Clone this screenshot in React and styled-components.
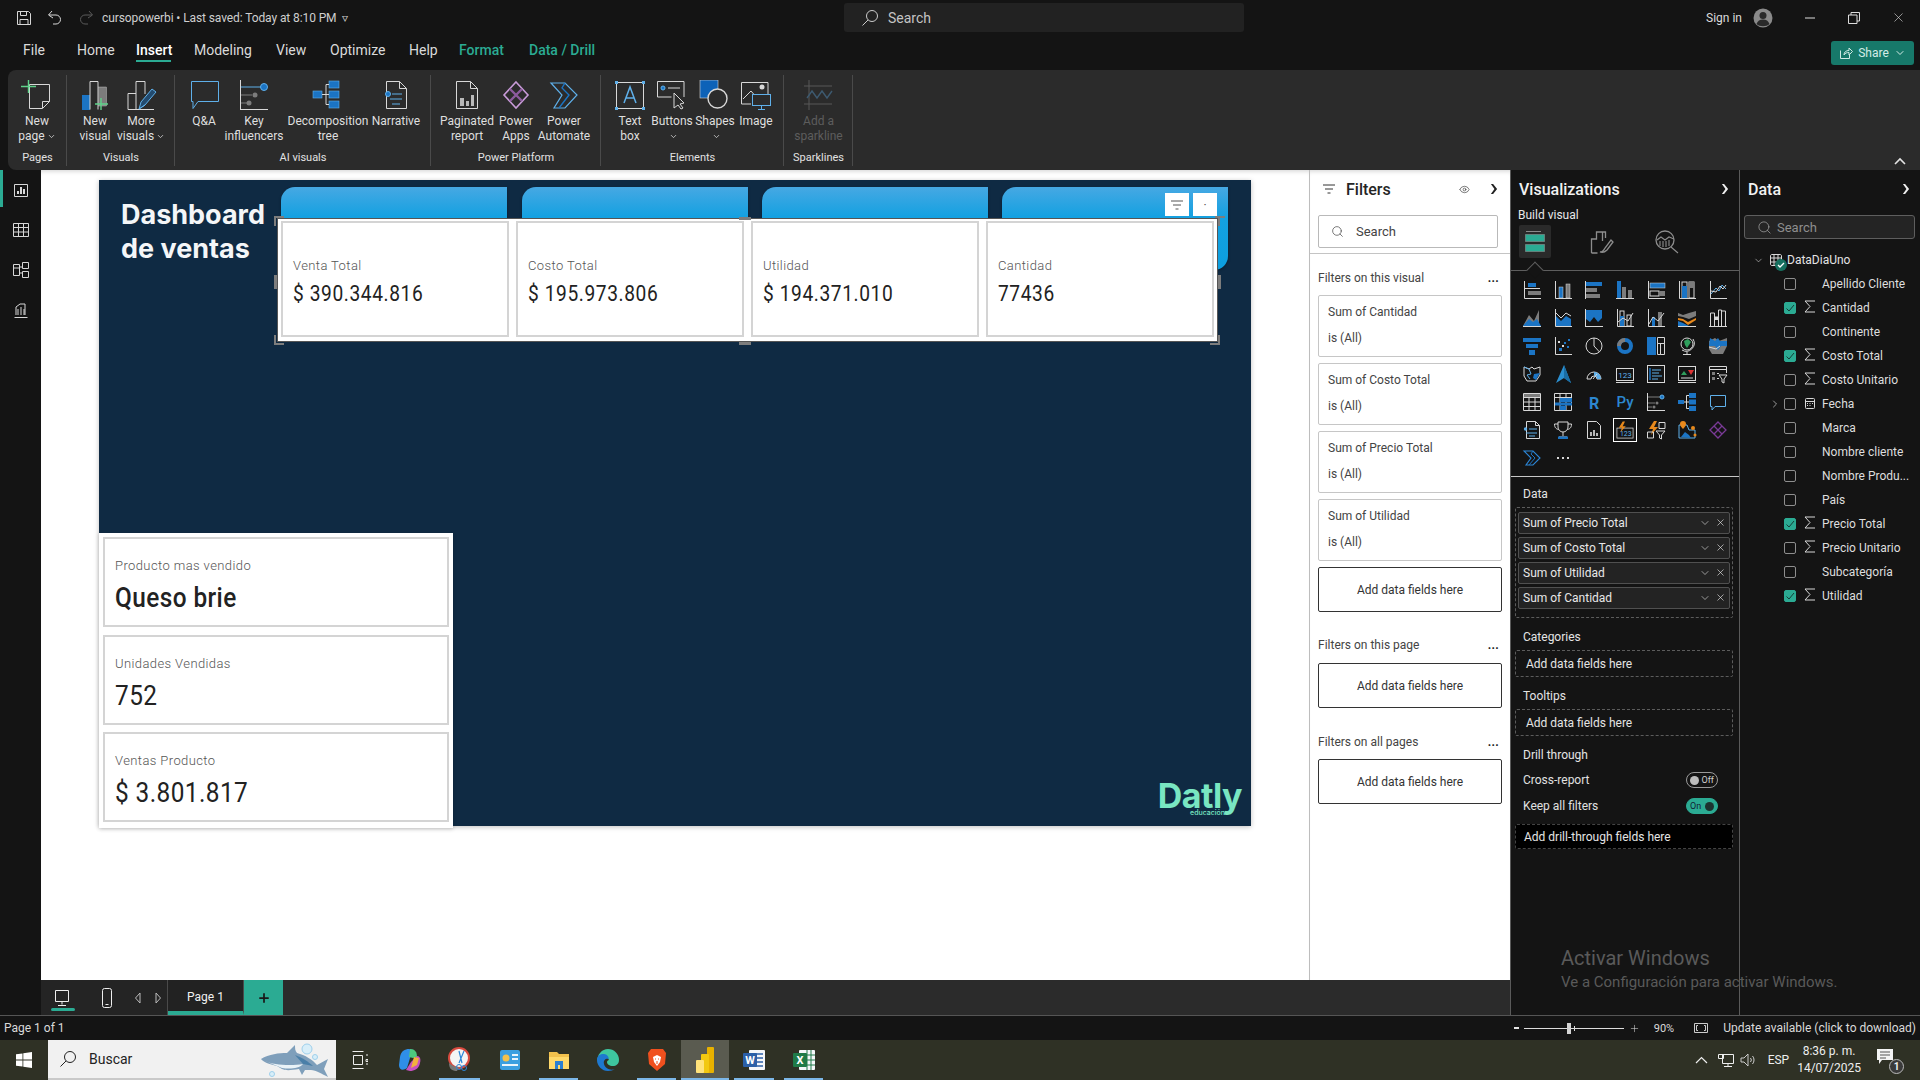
import React from 'react'
import styled, { createGlobalStyle } from 'styled-components'
import { Search, ChevronDown, ChevronRight, X, Plus, Eye } from 'lucide-react'

const GlobalStyle = createGlobalStyle`
  html, body { margin: 0; padding: 0; background: #141414; }
  * { box-sizing: border-box; }
  body { font-family: Roboto, "Open Sans", sans-serif; }
`

const W = '#d8d8d8'
const B = '#1b74c4'
const L = '#5fb0ea'
const G = '#7c7c7c'
const T = '#2bab93'
const O = '#e8891c'

const Page = styled.div`
  width: 1920px;
  height: 1080px;
  display: flex;
  flex-direction: column;
  overflow: hidden;
  position: relative;
  background: #141414;
  color: #e4e4e4;
  font-size: 12px;
`

/* title bar */
const TitleBar = styled.div`
  height: 35px;
  display: grid;
  grid-template-columns: 844px 400px 1fr;
  align-items: center;
`
const TitleLeft = styled.div`
  display: flex;
  align-items: center;
  padding-left: 16px;
  gap: 15px;
`
const DocName = styled.span`
  margin-left: -7px;
  color: #cfcfcf;
  white-space: nowrap;
  font-size: 12px;
  letter-spacing: -0.1px;
`
const TopSearch = styled.div`
  height: 29px;
  background: #222222;
  border-radius: 3px;
  display: flex;
  align-items: center;
  gap: 9px;
  padding-left: 17px;
  font-size: 14px;
  color: #c4c4c4;
`
const TitleRight = styled.div`
  display: flex;
  align-items: center;
  justify-content: flex-end;
  color: #dcdcdc;
`
const SignIn = styled.span`
  margin-right: 11px;
`
const WinBtn = styled.div`
  width: 44px;
  margin-left: ${p => p.$ml || 0}px;
  display: flex;
  justify-content: center;
`

/* menu */
const MenuBar = styled.div`
  height: 35px;
  display: flex;
  align-items: center;
  padding-left: 23px;
`
const MenuItem = styled.div`
  width: ${p => p.$w}px;
  height: 35px;
  line-height: 30px;
  font-size: 14px;
  position: relative;
  color: ${p => (p.$ctx ? T : '#dadada')};
  font-weight: ${p => (p.$active || p.$ctx ? 500 : 400)};
  ${p => p.$active && `
    color: #fff;
    &::after {
      content: '';
      position: absolute;
      left: 0;
      top: 25px;
      width: 35px;
      height: 2px;
      background: ${T};
    }
  `}
`
const ShareBtn = styled.div`
  margin-left: auto;
  margin-right: 6px;
  width: 83px;
  height: 24px;
  background: #17796a;
  border-radius: 3px;
  display: flex;
  align-items: center;
  justify-content: center;
  gap: 5px;
  color: #d4ece6;
`

/* ribbon */
const Ribbon = styled.div`
  height: 100px;
  margin-left: 8px;
  background: #2b2b2b;
  border-radius: 8px 0 0 8px;
  display: flex;
  position: relative;
`
const Group = styled.div`
  width: ${p => p.$w}px;
  display: flex;
  flex-direction: column;
  position: relative;
  &::after {
    content: '';
    position: absolute;
    right: 0;
    top: 5px;
    bottom: 4px;
    width: 1px;
    background: #4a4a4a;
  }
`
const GroupRow = styled.div`
  display: flex;
  height: 80px;
  padding-top: 10px;
  padding-left: ${p => p.$pl || 0}px;
`
const GroupName = styled.div`
  text-align: center;
  font-size: 11px;
  line-height: 16px;
  color: #e2e2e2;
`
const RibbonBtn = styled.div`
  width: ${p => p.$w}px;
  display: flex;
  flex-direction: column;
  align-items: center;
  text-align: center;
  color: ${p => (p.$off ? '#5d5d5d' : '#dfdfdf')};
  font-size: 12px;
  line-height: 15px;
  white-space: nowrap;
  svg.big { width: 32px; height: 30px; margin-bottom: 4px; flex: none; }
`
const Caret = styled(ChevronDown)`
  vertical-align: -1px;
  margin-left: 2px;
`
const CollapseBtn = styled.div`
  position: absolute;
  right: 14px;
  bottom: 5px;
  line-height: 0;
  color: #dcdcdc;
`

/* body */
const Body = styled.div`
  height: 845px;
  display: flex;
`
const LeftNav = styled.div`
  width: 41px;
  flex: none;
  display: flex;
  flex-direction: column;
  align-items: center;
`
const NavBtn = styled.div`
  width: 41px;
  height: 40px;
  display: flex;
  align-items: center;
  justify-content: center;
  position: relative;
  ${p => p.$on && `
    &::before {
      content: '';
      position: absolute;
      left: 0;
      top: 0;
      bottom: 3px;
      width: 3px;
      background: ${T};
    }
  `}
`
const Work = styled.div`
  width: 1469px;
  flex: none;
  display: flex;
  flex-direction: column;
`
const WorkTop = styled.div`
  height: 810px;
  display: flex;
`
const CanvasArea = styled.div`
  width: 1268px;
  background: #fff;
  padding: 10px 0 0 58px;
  box-shadow: inset 0 5px 5px -4px #00000030;
`

/* report, a free canvas of visuals */
const Report = styled.div`
  width: 1152px;
  height: 646px;
  background: #0f2a43;
  position: relative;
  box-shadow: 0 1px 5px #00000040;
`
const ReportTitle = styled.div`
  position: absolute;
  left: 22px;
  top: 18px;
  font-family: Inter, Roboto, sans-serif;
  font-size: 27px;
  line-height: 34px;
  font-weight: 700;
  color: #f4f6f8;
`
const Banner = styled.div`
  position: absolute;
  top: 7px;
  left: ${p => p.$x}px;
  width: 226px;
  height: 83px;
  background: linear-gradient(#46a8e3, #14a1e1 30px, #0c9fe0);
  border-radius: 14px 0 14px 0;
  box-shadow: 0 1px 3px #00000050;
`
const CardGroup = styled.div`
  position: absolute;
  left: 178px;
  top: 38px;
  width: 941px;
  height: 124px;
  background: #fff;
  border: 1px solid #555;
  padding: 2px 4px 4px 3px;
  display: grid;
  grid-template-columns: repeat(4, 228px);
  gap: 7px;
`
const Card = styled.div`
  border: 2px solid #d4d4d4;
  display: flex;
  flex-direction: column;
  justify-content: center;
  padding-left: 10px;
  padding-top: ${p => p.$pt || 5}px;
  background: #fff;
`
const CardLabel = styled.div`
  font-size: 13px;
  line-height: 18px;
  font-weight: 300;
  color: #555;
  letter-spacing: 0.4px;
`
const CardValue = styled.div`
  font-size: 22px;
  line-height: 24px;
  margin-top: 7px;
  color: #222;
  letter-spacing: 0.7px;
  transform: scaleX(0.87);
  transform-origin: left;
`
const Handle = styled.div`
  position: absolute;
  background: #7d7d7d;
  left: ${p => p.$x}px;
  top: ${p => p.$y}px;
  width: ${p => p.$w}px;
  height: ${p => p.$h}px;
`
const HeaderBtn = styled.div`
  position: absolute;
  left: ${p => p.$x}px;
  top: 13px;
  width: 24px;
  height: 23px;
  background: #fff;
  display: flex;
  align-items: center;
  justify-content: center;
  color: #555;
`
const ProductPanel = styled.div`
  position: absolute;
  left: 0;
  top: 353px;
  width: 354px;
  height: 295px;
  background: #fff;
  padding: 4px 4px 6px;
  display: grid;
  grid-template-rows: repeat(3, 90px);
  gap: 7.5px;
  box-shadow: 0 1px 4px #00000030;
`
const ProductValue = styled(CardValue)`
  font-size: 28px;
  line-height: 32px;
  margin-top: 7px;
  letter-spacing: 0.5px;
  font-weight: ${p => (p.$bold ? 500 : 400)};
`
const Logo = styled.div`
  position: absolute;
  right: 9px;
  bottom: 15px;
  font-family: Inter, sans-serif;
  font-weight: 700;
  font-size: 34px;
  line-height: 30px;
  letter-spacing: -0.5px;
  color: #79e6c2;
`
const LogoSub = styled.div`
  position: absolute;
  right: 17px;
  top: calc(100% - 2px);
  font-size: 7px;
  line-height: 8px;
  letter-spacing: 0;
  font-weight: 500;
`

/* filters */
const FiltersPane = styled.div`
  width: 201px;
  background: #fff;
  border-left: 1px solid #bdbdbd;
  color: #333;
  box-shadow: inset 0 5px 5px -4px #00000030;
`
const PaneHead = styled.div`
  height: 38px;
  display: flex;
  align-items: center;
  gap: ${p => p.$gap || 0}px;
  padding: 0 ${p => p.$pr || 10}px 0 ${p => p.$pl || 8}px;
  font-size: 16px;
  font-weight: 500;
  color: ${p => (p.$light ? '#252525' : '#f2f2f2')};
`
const PushRight = styled.div`
  margin-left: auto;
  display: flex;
  align-items: center;
  gap: 20px;
  line-height: 0;
`
const FilterSearchWrap = styled.div`
  padding: 7px 0 5px 8px;
  border-bottom: 1px solid #c4c4c4;
`
const FilterSearch = styled.div`
  width: 180px;
  height: 33px;
  border: 1px solid #b9b9b9;
  border-radius: 2px;
  display: flex;
  align-items: center;
  gap: 12px;
  padding-left: 12px;
  font-size: 13px;
  color: #444;
`
const FilterBody = styled.div`
  padding: 16px 8px 0;
`
const FilterTitle = styled.div`
  height: 16px;
  display: flex;
  justify-content: space-between;
  align-items: center;
  margin-top: ${p => p.$mt || 0}px;
  margin-bottom: ${p => p.$mb || 9}px;
  color: #444;
  padding-right: 3px;
`
const Dots = styled.span`
  font-weight: 700;
  font-size: 12px;
  letter-spacing: 0.3px;
  color: #222;
`
const FilterCards = styled.div`
  display: flex;
  flex-direction: column;
  gap: 6px;
`
const FilterCard = styled.div`
  height: 62px;
  border: 1px solid #c6c6c6;
  border-radius: 2px;
  padding: 3px 0 0 9px;
  line-height: 26px;
  color: #444;
`
const AddFields = styled.div`
  height: 45px;
  border: 1px solid #333;
  border-radius: 2px;
  display: flex;
  align-items: center;
  justify-content: center;
  color: #333;
`

/* tab bar */
const TabBar = styled.div`
  height: 35px;
  display: flex;
  background: #2b2b2b;
`
const DeviceBox = styled.div`
  width: 127px;
  display: flex;
  align-items: center;
  background: #242424;
  border-right: 1px solid #4a4a4a;
  padding-left: 13px;
  position: relative;
`
const DeviceBtn = styled.div`
  width: ${p => p.$w}px;
  line-height: 0;
`
const DeviceMark = styled.div`
  position: absolute;
  left: 10px;
  bottom: 4px;
  width: 24px;
  height: 3px;
  border-radius: 2px;
  background: ${T};
`
const PageTab = styled.div`
  width: 76px;
  display: flex;
  align-items: center;
  justify-content: center;
  background: #222;
  color: #f0f0f0;
  border-bottom: 4px solid ${T};
  border-right: 1px solid #4a4a4a;
  padding-top: 3px;
`
const AddTab = styled.div`
  width: 39px;
  background: ${T};
  display: flex;
  align-items: center;
  justify-content: center;
  color: #1a1a1a;
`

/* visualizations */
const VizPane = styled.div`
  width: 229px;
  flex: none;
  border-left: 1px solid #5a5a5a;
  display: flex;
  flex-direction: column;
`
const BuildLabel = styled.div`
  height: 14px;
  line-height: 14px;
  padding-left: 7px;
  color: #e8e8e8;
`
const VizTabs = styled.div`
  margin-top: 3px;
  height: 46px;
  display: flex;
  padding-left: 8px;
  border-bottom: 1px solid #5e5e5e;
  position: relative;
  &::after {
    content: '';
    position: absolute;
    left: 18px;
    bottom: -6px;
    width: 11px;
    height: 11px;
    background: #141414;
    border-left: 1px solid #5e5e5e;
    border-top: 1px solid #5e5e5e;
    transform: rotate(45deg);
  }
`
const VizTab = styled.div`
  width: 32px;
  height: 33px;
  margin-right: ${p => p.$mr || 0}px;
  background: ${p => (p.$on ? '#2a2a2a' : 'transparent')};
  border-radius: 2px;
  display: flex;
  align-items: center;
  justify-content: center;
`
const VizGrid = styled.div`
  margin-top: 5px;
  padding-left: 5px;
  display: grid;
  grid-template-columns: repeat(7, 31px);
  grid-auto-rows: 28px;
  height: 201px;
  border-bottom: 1px solid #c8c8c8;
`
const VizCell = styled.div`
  display: flex;
  align-items: center;
  justify-content: center;
  svg { width: 18px; height: 18px; overflow: visible; }
`
const WellLabel = styled.div`
  height: 16px;
  line-height: 16px;
  margin-top: ${p => p.$mt}px;
  margin-bottom: ${p => p.$mb || 5}px;
  padding-left: 12px;
  color: #e4e4e4;
`
const Well = styled.div`
  margin-left: 4px;
  width: 218px;
  border: 1px dashed #5c5c5c;
  border-radius: 2px;
  padding: 4px 2px 8px;
  display: flex;
  flex-direction: column;
  gap: 3px;
`
const Chip = styled.div`
  height: 22px;
  background: #232323;
  border: 1px solid #505050;
  border-radius: 2px;
  display: flex;
  align-items: center;
  padding: 0 3px 0 4px;
  color: #e8e8e8;
`
const ChipIcons = styled.div`
  margin-left: auto;
  display: flex;
  gap: 4px;
  color: #e8e8e8;
  line-height: 0;
`
const EmptyWell = styled.div`
  margin-left: 4px;
  width: 218px;
  height: ${p => p.$h || 27}px;
  margin-top: ${p => p.$mt || 0}px;
  border: 1px dashed ${p => (p.$dark ? '#444' : '#5c5c5c')};
  background: ${p => (p.$dark ? '#000' : 'transparent')};
  border-radius: 2px;
  display: flex;
  align-items: center;
  padding-left: ${p => (p.$dark ? 8 : 10)}px;
  color: #e4e4e4;
`
const ToggleRow = styled.div`
  height: 26px;
  display: flex;
  align-items: center;
  justify-content: space-between;
  padding: 0 21px 0 12px;
  color: #e0e0e0;
`
const Toggle = styled.div`
  width: 32px;
  height: 16px;
  border-radius: 8px;
  display: flex;
  align-items: center;
  justify-content: space-between;
  flex-direction: ${p => (p.$on ? 'row' : 'row-reverse')};
  padding: 0 3px;
  font-size: 9px;
  background: ${p => (p.$on ? T : 'transparent')};
  color: ${p => (p.$on ? '#123' : '#cfcfcf')};
  border: 1px solid ${p => (p.$on ? T : '#9a9a9a')};
  &::after {
    content: '';
    width: 9px;
    height: 9px;
    border-radius: 50%;
    background: ${p => (p.$on ? '#1c3330' : '#bdbdbd')};
  }
`

/* data pane */
const DataPane = styled.div`
  width: 181px;
  flex: none;
  border-left: 1px solid #5a5a5a;
`
const DataSearch = styled.div`
  margin: 7px 0 9px 4px;
  width: 171px;
  height: 24px;
  background: #242424;
  border: 1px solid #5e5e5e;
  border-radius: 3px;
  display: flex;
  align-items: center;
  gap: 5px;
  padding-left: 12px;
  font-size: 13px;
  color: #8e8e8e;
`
const TreeRoot = styled.div`
  height: 24px;
  display: flex;
  align-items: center;
  padding-left: 13px;
  color: #e4e4e4;
`
const RootIcon = styled.div`
  position: relative;
  width: 14px;
  height: 14px;
  margin: 0 4px 0 5px;
  line-height: 0;
`
const Badge = styled.div`
  position: absolute;
  left: 6px;
  top: 6px;
  width: 12px;
  height: 12px;
  border-radius: 50%;
  background: #16705f;
  line-height: 0;
`
const TreeRow = styled.div`
  height: 24px;
  display: grid;
  grid-template-columns: 44px 12px 8px 12px 6px 1fr;
  align-items: center;
  color: #dedede;
`
const Expand = styled.div`
  display: flex;
  justify-content: flex-end;
  padding-right: 3px;
  line-height: 0;
`
const Check = styled.div`
  width: 12px;
  height: 12px;
  border-radius: 2px;
  border: 1px solid ${p => (p.$on ? T : '#8e8e8e')};
  background: ${p => (p.$on ? T : 'transparent')};
  line-height: 0;
`
const FieldName = styled.div`
  grid-column: 6;
  white-space: nowrap;
`
const Watermark = styled.div`
  position: absolute;
  left: 1561px;
  top: 945px;
  color: #5a5a5a;
  font-size: 15px;
  line-height: 22px;
  pointer-events: none;
`
const WatermarkBig = styled.div`
  font-size: 20px;
  line-height: 26px;
`

/* status */
const StatusBar = styled.div`
  height: 25px;
  border-top: 1px solid #555;
  display: flex;
  align-items: center;
  padding: 0 4px;
  color: #dadada;
  font-size: 12px;
`
const StatusRight = styled.div`
  margin-left: auto;
  display: flex;
  align-items: center;
`
const MinusMark = styled.div`
  width: 5px;
  height: 2px;
  background: #e4e4e4;
  margin-right: 2px;
`
const Slider = styled.div`
  width: 100px;
  height: 1px;
  background: #ddd;
  margin: 0 5px 0 3px;
  position: relative;
  &::before {
    content: '';
    position: absolute;
    left: 43px;
    top: -5px;
    width: 4px;
    height: 11px;
    background: #d4d4d4;
  }
  &::after {
    content: '';
    position: absolute;
    left: 50px;
    top: -2px;
    width: 1px;
    height: 5px;
    background: #ddd;
  }
`
const ZoomPct = styled.span`
  margin: 0 20px 0 14px;
  font-size: 11px;
`
const FitIcon = styled.span`
  line-height: 0;
  margin-right: 15px;
`

/* taskbar */
const TaskBar = styled.div`
  height: 40px;
  display: flex;
  align-items: stretch;
  background: #2f3125;
  color: #f0f0f0;
`
const StartBtn = styled.div`
  width: 48px;
  display: flex;
  align-items: center;
  justify-content: center;
`
const TaskSearch = styled.div`
  width: 288px;
  background: #f1f1f1;
  border-bottom: 2px solid #c9c9c9;
  display: flex;
  align-items: center;
  gap: 12px;
  padding-left: 11px;
  color: #222;
  font-size: 14px;
  position: relative;
`
const Shark = styled.div`
  position: absolute;
  right: 4px;
  top: 1px;
  line-height: 0;
`
const TaskApps = styled.div`
  display: flex;
`
const TaskApp = styled.div`
  width: ${p => p.$w || 49}px;
  display: flex;
  align-items: center;
  justify-content: center;
  position: relative;
  background: ${p => (p.$active ? '#5a5b50' : 'transparent')};
  ${p => p.$open && `
    &::after {
      content: '';
      position: absolute;
      left: ${p.$active ? 0 : 5}px;
      right: ${p.$active ? 0 : 5}px;
      bottom: 0;
      height: 2px;
      background: #7cb7e8;
    }
  `}
`
const Tray = styled.div`
  margin-left: auto;
  display: flex;
  align-items: center;
  color: #eee;
`
const TrayItem = styled.div`
  margin-right: ${p => p.$mr || 0}px;
  line-height: 0;
  font-size: 12px;
`
const Clock = styled.div`
  text-align: center;
  font-size: 12px;
  line-height: 17px;
  margin-right: 15px;
  white-space: nowrap;
`
const Notify = styled.div`
  width: 22px;
  height: 24px;
  position: relative;
  margin-right: 22px;
  line-height: 0;
`
const NotifyCount = styled.div`
  position: absolute;
  right: -6px;
  bottom: -2px;
  width: 15px;
  height: 15px;
  border-radius: 50%;
  border: 1px solid #bbb;
  background: #3a3a3a;
  font-size: 10px;
  line-height: 13px;
  text-align: center;
  font-weight: 700;
`

/* drawings */
const Svg = ({ w = 32, h = 30, vb, className, children }) => (
  <svg className={className} width={w} height={h} viewBox={vb || `0 0 ${w} ${h}`} fill="none" strokeWidth="1">
    {children}
  </svg>
)
const Big = ({ children }) => <Svg className="big">{children}</Svg>

const NewPageIcon = () => (
  <Big>
    <path d="M8.5 4.5h20v17l-7 7h-13z" stroke={W} />
    <path d="M21.5 28v-6.5h7" stroke={W} />
    <path d="M0 6.5h15M7.5 0v13" stroke="#5fd28a" strokeWidth="1.4" />
  </Big>
)
const NewVisualIcon = () => (
  <Big>
    <rect x="3" y="15" width="8" height="15" fill={B} />
    <path d="M11 29.5V1.5h8v28" stroke={W} />
    <rect x="19.5" y="7" width="8" height="19" fill={G} stroke={W} strokeWidth="0.4" />
    <path d="M22 18v12M16 24h13" stroke="#5fd28a" strokeWidth="1.4" />
  </Big>
)
const MoreVisualsIcon = () => (
  <Big>
    <path d="M3 29.5v-16h8m0 16V1.5h9V14M3 29.5h26" stroke={W} />
    <path d="M14 29l2-7 11-13 4 3-11 13z" stroke={L} fill={B} fillOpacity="0.45" />
    <path d="M14 29l6-4" stroke={L} />
  </Big>
)
const QnaIcon = () => (
  <Big>
    <path d="M3.5 1.5h27v20H10l-5 7v-7H3.500z" stroke={L} />
  </Big>
)
const KeyInfIcon = () => (
  <Big>
    <path d="M2.5 0v30M2.500 29.500H30" stroke={W} />
    <path d="M3 7h20" stroke={L} />
    <circle cx="26" cy="7" r="3.500" fill={B} stroke={L} />
    <path d="M3 15h11M3 23h6" stroke={G} />
    <circle cx="17" cy="15" r="2.500" fill={G} />
    <circle cx="11" cy="23" r="2.500" fill={G} />
  </Big>
)
const DecompIcon = () => (
  <Big>
    <rect x="1" y="11" width="9" height="7" fill={B} stroke={L} strokeWidth="0.6" />
    <rect x="17" y="1" width="10" height="7" fill={B} stroke={L} strokeWidth="0.6" />
    <rect x="17" y="11" width="10" height="7" fill={B} stroke={L} strokeWidth="0.6" />
    <rect x="17" y="21" width="10" height="7" fill={B} stroke={L} strokeWidth="0.6" />
    <path d="M10 14.500h7M14 4.500v20M14 4.500h3M14 24.500h3" stroke={W} />
  </Big>
)
const NarrativeIcon = () => (
  <Big>
    <path d="M6.500 1.500h13l7 7v20h-20z" stroke={W} />
    <path d="M19.500 1.500v7h7" stroke={W} />
    <circle cx="8" cy="14" r="2.500" fill={B} stroke={L} />
    <path d="M12 14h10M10 19h12M12 24h8" stroke={L} />
  </Big>
)
const PaginatedIcon = () => (
  <Big>
    <path d="M5.500 1.500h14l7 7v20h-21z" stroke={W} />
    <path d="M19.500 1.500v7h7" stroke={W} />
    <path d="M9 18h4v8H9zM15 21h3v5h-3zM20 15h3v11h-3z" fill="#b9b9b9" />
  </Big>
)
const PowerAppsIcon = ({ c = '#c89bd8', h = '#8c5a9e' }) => (
  <Big>
    <path d="M16 2l12 13-12 13L4 15z" stroke={c} strokeWidth="1.6" />
    <path d="M10 9l12 12M22 9L10 21" stroke={h} strokeWidth="2.4" />
  </Big>
)
const AutomateIcon = () => (
  <Big>
    <path d="M3 3h14l12 12-12 13H6l8-13z" stroke={L} strokeWidth="1.2" />
    <path d="M17 3l-3 5 7 7-10 13" stroke={B} strokeWidth="1.400" />
  </Big>
)
const TextBoxIcon = () => (
  <Big>
    <rect x="2.500" y="2.500" width="27" height="26" stroke={W} />
    <path d="M1 1h3v3H1zM28 1h3v3h-3zM1 27h3v3H1zM28 27h3v3h-3z" fill={L} />
    <path d="M10 23l6-16 6 16M12 18h8" stroke={L} strokeWidth="1.500" />
  </Big>
)
const ButtonsIcon = () => (
  <Big>
    <path d="M28 17V1.500H1.500V17h14" stroke={W} />
    <circle cx="7" cy="8" r="2" stroke={L} fill={B} />
    <path d="M12 8h12" stroke={W} />
    <path d="M18 13v15l4-3 3 4 2-1-3-4 4-1z" stroke={W} fill="#2b2b2b" />
  </Big>
)
const ShapesIcon = () => (
  <Big>
    <rect x="1" y="0" width="18" height="18" fill="#0d62b8" stroke={W} strokeWidth="0.6" />
    <circle cx="18.500" cy="18.500" r="9.500" stroke={W} strokeWidth="1.400" fill="#2b2b2b" />
  </Big>
)
const ImageIcon = () => (
  <Big>
    <path d="M28 14V2.500H1.500V24H11" stroke={W} />
    <path d="M3 19l8-8 6 7" stroke={W} />
    <circle cx="22" cy="7" r="2.500" fill={W} />
    <rect x="12.500" y="14.500" width="18" height="11" stroke={L} fill="#2b2b2b" />
    <path d="M21.500 26v3M18 29.500h7" stroke={L} />
  </Big>
)
const SparkIcon = () => (
  <Big>
    <path d="M6 0v30M1 6h28M1 24h28" stroke="#585858" />
    <path d="M4 18l5-7 5 7 5-7 5 7 5-7" stroke="#3d5a70" strokeWidth="1.400" />
  </Big>
)

const NavReport = () => (
  <Svg w={16} h={16}><path d="M1.500 2.500h13v12h-13z" stroke={W} /><path d="M4 12V9h2v3zM7 12V5h2v7zM10 12V7h2v5z" fill={W} /></Svg>
)
const NavTable = () => (
  <Svg w={18} h={16}><path d="M1.500 1.500h15v13h-15zM1.500 5.500h15M1.500 10h15M6.500 1.500v13M11.500 1.500v13" stroke={W} /></Svg>
)
const NavModel = () => (
  <Svg w={18} h={18}><path d="M1.500 3.500h6v11h-6zM10.500 1.500h6v6h-6zM10.500 10.500h6v6h-6zM7.500 6h3M7.500 12h3M1.500 7h6" stroke={W} /></Svg>
)
const NavDax = () => (
  <Svg w={18} h={18}><path d="M2.500 16.500h13M4 14V6l4-3h5v11M6 14V8M9 14V6M12 14V8" stroke={W} /></Svg>
)

const AxisV = () => <path d="M1.500 0v17.500H18" stroke={W} />
const viz = [
  <><AxisV /><rect x="5" y="2" width="8" height="4" fill={B} /><path d="M1.500 7.500H17" stroke={W} /><rect x="5" y="10" width="13" height="4" fill={G} /></>,
  <><AxisV /><rect x="5" y="6" width="4" height="11" fill={B} stroke={W} strokeWidth="0.5" /><rect x="12" y="3" width="4" height="14" fill={G} stroke={W} strokeWidth="0.5" /></>,
  <><rect x="1" y="1" width="16" height="4" fill={B} /><rect x="1" y="7" width="11" height="4" fill={G} /><rect x="1" y="13" width="14" height="4" fill={G} /><path d="M.500 0v18" stroke={W} /></>,
  <><rect x="1" y="0" width="4" height="18" fill={B} /><rect x="6" y="6" width="4" height="12" fill={G} /><rect x="12" y="9" width="4" height="9" fill={G} /><path d="M0 17.500h18" stroke={W} /></>,
  <><AxisV /><rect x="3" y="2" width="15" height="5" fill={B} stroke={W} strokeWidth="0.5" /><rect x="3" y="10" width="9" height="5" stroke={W} /><rect x="12" y="10" width="6" height="5" fill={G} /></>,
  <><AxisV /><rect x="4" y="1" width="5" height="16" stroke={W} /><rect x="4" y="5" width="5" height="12" fill={B} /><rect x="11" y="1" width="5" height="16" stroke={W} /><rect x="11" y="1" width="5" height="6" fill={G} /></>,
  <><AxisV /><path d="M2 13l5-6 3 3 3-6 4 4" stroke={L} /><path d="M2 10l5 1 4-6 3 3 3-4" stroke={W} /></>,
  <><path d="M0 17l6-11 5 6 5-11v16z" fill={G} /><path d="M0 17l6-7 4 3 4-3 4 7z" fill={B} /><path d="M0 17.500h18" stroke={W} /></>,
  <><AxisV /><path d="M2 7l5 5 5-5 5 3v7H2z" fill={B} /><path d="M2 4l5 5 5-5 5 3" stroke={W} /></>,
  <><path d="M1 1h16v8l-4 4-4-5-4 5-4-3z" fill={B} /><path d="M.500 0v18M0 17.500h18" stroke={W} /></>,
  <><AxisV /><rect x="4" y="2" width="4" height="15" stroke={W} /><rect x="4" y="7" width="4" height="10" fill={B} /><rect x="11" y="6" width="4" height="11" stroke={W} /><path d="M2 13l5-4 5 3 5-8" stroke={W} /></>,
  <><AxisV /><rect x="5" y="8" width="3" height="9" fill={B} /><rect x="11" y="3" width="4" height="14" fill={G} /><path d="M2 15l4-7 5 4 6-8" stroke={W} /></>,
  <><path d="M0 4l5 2 6-2 7-2v5l-7 3-6-2-5-1z" fill={G} /><path d="M0 9l5 1 5 3 8-4v2l-8 5-5-4-5-1z" fill={O} /><path d="M0 12l5 2 6 3h7v1H0z" fill={B} /><path d="M0 17.500h18" stroke={W} /></>,
  <><path d="M1.500 18V4h4v14M5.500 18V8h4v10M9.500 18V1h3v17M12.500 18V2h4v16M0 17.500h18" stroke={W} /><rect x="6" y="8" width="3" height="3" fill={W} /></>,
  <><path d="M0 1h18v4H0z" fill={B} /><path d="M3 7h12v4H3z" fill={B} /><path d="M6 13h6v5H6z" fill={B} /></>,
  <><AxisV /><path d="M5 11h3v3H5zM10 5h2v2h-2zM14 2h2v2h-2zM13 9h2v2h-2z" fill={B} /><path d="M8 8h2v2H8zM4 4h2v2H4z" fill={W} /></>,
  <><circle cx="9" cy="9" r="8" stroke={W} /><path d="M9 9V1M9 9l5.500 6" stroke={W} /></>,
  <><circle cx="9" cy="9" r="6" stroke={B} strokeWidth="4" /><path d="M3 9a6 6 0 0 1 6-6" stroke={G} strokeWidth="4" /></>,
  <><path d="M0 0h9v18H0z" fill={B} /><path d="M10.500.500h7v6h-7zM10.500 6.500h3v11h-3zM13.500 6.500h4v11h-4z" stroke={W} /></>,
  <><circle cx="9" cy="7" r="6" stroke={W} /><path d="M6 4l4-2 3 3-2 3-2 3-2-3z" fill="#2f9e5c" /><path d="M15 2a8 8 0 0 1-11 11M9 15v2M5 17.500h8" stroke={W} /></>,
  <><path d="M0 4l6-3 4 3 8-3v8l-4 8H3l-3-5z" fill={G} /><path d="M1 1l5 3 3-3 2 3h7v5h-6l-3 4-3-4H0z" fill={B} /><path d="M0 10l7 2 4-3" stroke={W} /></>,
  <><path d="M1 2l5 2 3-2 2 2 6-2v8l-4 6H4l-3-5z" stroke={W} /><path d="M1 2l5 2 2 5-4 1 3 4" stroke={L} /><path d="M11 9l6-1-4 7-3-2z" fill={B} /></>,
  <><path d="M10 0l7 18-7-5-8 5z" fill="#2b8fd0" /><path d="M10 0v13l7 5z" fill="#1b6da4" /></>,
  <><path d="M2 14a7 7 0 0 1 14 0h-4a3 3 0 0 0-6 0z" stroke={W} /><path d="M9 7a7 7 0 0 1 7 7h-4a3 3 0 0 0-3-3z" fill={L} /><path d="M8 14l4-5" stroke={W} /></>,
  <><rect x=".500" y="3.500" width="17" height="12" stroke={W} /><text x="9" y="12.500" fontSize="8" fill={L} textAnchor="middle" fontFamily="Roboto">123</text><path d="M0 17.500h18" stroke={W} /></>,
  <><rect x=".500" y=".500" width="17" height="17" stroke={W} /><path d="M3 3v12" stroke={B} strokeWidth="1.500" /><path d="M5 5h9M5 8h7M5 11h10M5 14h6" stroke={L} /></>,
  <><rect x=".500" y="1.500" width="17" height="14" stroke={W} /><path d="M3 10l3-4 3 4z" fill="#2f9e5c" /><path d="M10 5h6l-3 5z" fill="#d33" /><path d="M0 17.500h18M3 13h12" stroke={W} /></>,
  <><path d="M.500 18V1.500h17V8M0 4.500h18" stroke={W} /><path d="M3 7h3v3H3zM3 12h3v3H3z" fill={G} /><path d="M8 8.500h2M8 13.500h2" stroke={W} /><path d="M10 10h8l-3 4v4l-2-1v-3z" stroke={W} /></>,
  <><path d="M.500.500h17v17H.500zM0 4.500h18M0 9h18M0 13.500h18M6 4v14M12 4v14" stroke={W} /><rect x="1" y="1" width="16" height="3" fill={G} /></>,
  <><path d="M.500.500h17v17H.500zM6 0v18M12 0v18M0 4.500h18" stroke={W} /><path d="M6 5h12v4H6zM1 9.500h17v3H1zM6 13h6v4H6z" fill={B} /></>,
  <text x="9" y="15.500" fontSize="16" fontWeight="700" fill="#2c87cf" textAnchor="middle" fontFamily="Roboto">R</text>,
  <text x="9" y="14" fontSize="15" fontWeight="500" fill="#2c87cf" textAnchor="middle" fontFamily="Roboto">Py</text>,
  <><path d="M.500 0v18M0 17.500h18" stroke={W} /><path d="M1 4h12M1 10h7M1 14h4" stroke={G} /><circle cx="15" cy="4" r="2" fill={B} stroke={L} /><circle cx="10" cy="10" r="1.500" fill={G} /><circle cx="7" cy="14" r="1.500" fill={G} /></>,
  <><rect x="0" y="7" width="6" height="4" fill={B} /><path d="M11 0h7v5h-7zM11 6.500h7v5h-7zM11 13h7v5h-7z" fill={B} /><path d="M6 9h5M8.500 2.500v13M8.500 2.500H11M8.500 15.500H11" stroke={W} /></>,
  <path d="M1.500 2.500h15v11H6l-3 3.500v-3.500H1.500z" stroke={L} />,
  <><path d="M3.500.500h9l4 4v13h-13z" stroke={W} /><path d="M12.500.500v4h4" stroke={W} /><circle cx="2.500" cy="8" r="1.700" fill={L} /><path d="M6 8h8M3 12h11M6 15h6" stroke={L} /></>,
  <><path d="M4 1h10v5a5 5 0 0 1-10 0zM4 3H0.500c0 4 2 5 4 5.500M14 3h3.500c0 4-2 5-4 5.500" stroke={W} /><path d="M9 11v4M5 16h8" stroke={W} /><rect x="4" y="15.500" width="10" height="2.500" fill={B} /></>,
  <><path d="M2.500.500h9l4 4v13h-13z" stroke={W} /><path d="M5 15v-4h2v4zM8 15V9h2v6zM11 15v-3h2v3z" fill="#b9b9b9" /></>,
  <><rect x="2.500" y="8.500" width="21" height="13" stroke={W} /><text x="14" y="19" fontSize="9" fill={L} textAnchor="middle" fontFamily="Roboto">123</text><path d="M10 0L5 8h4l-2 6 7-8h-4l3-6z" fill={O} /></>,
  <><path d="M7 0L2 8h4L4 14l7-8H7l3-6z" fill={O} /><path d="M12 1.500h6v6h-6zM.500 11h6v6h-6zM9 10h9l-3.500 4v4l-2-1v-3z" stroke={W} /></>,
  <><path d="M1 4h8l2 5h6v8H1z" stroke={L} /><path d="M5 0a3 3 0 0 1 3 3c0 2-3 5-3 5S2 5 2 3a3 3 0 0 1 3-3z" fill={O} /><path d="M3 16l4-5 4 3 2 3z" fill={B} /><circle cx="15" cy="7" r="2" fill={O} /><circle cx="17" cy="14" r="1.500" fill={O} /></>,
  <><path d="M9 1l8 8-8 8-8-8z" stroke="#7a3a96" strokeWidth="1.300" /><path d="M5 5l8 8M13 5l-8 8" stroke="#7a3a96" strokeWidth="1.300" /></>,
  <><path d="M1 2h9l7 7-7 7H3l5-7z" stroke="#2c87d8" strokeWidth="1.100" /><path d="M10 2L8 5l4 4-6 7" stroke={B} /></>,
  <path d="M3 8h2v2H3zM8 8h2v2H8zM13 8h2v2h-2z" fill={W} />
]

const SelectedViz = styled.div`
  width: 24px;
  height: 24px;
  border: 1px solid #fff;
  display: flex;
  align-items: center;
  justify-content: center;
  svg { width: 20px; height: 20px; }
`

const BuildTabIcon = () => (
  <Svg w={20} h={24}>
    <path d="M1 1.500h15" stroke="#8a8a8a" />
    <rect x=".500" y="4.500" width="19" height="7" fill={T} stroke="#9a9a9a" strokeDasharray="1 1" />
    <rect x=".500" y="14.500" width="19" height="7" fill={T} stroke="#9a9a9a" strokeDasharray="1 1" />
  </Svg>
)
const FormatTabIcon = () => (
  <Svg w={24} h={24}>
    <path d="M1.500 23V9h5V2h6v9M12.500 2h3v6M1.500 23h6" stroke="#8d8d8d" strokeWidth="1.300" />
    <path d="M10 22c3 0 4-2 5-4l6-8 2 2-6 8c-2 2-4 3-7 2z" stroke="#8d8d8d" strokeWidth="1.300" />
  </Svg>
)
const AnalyticsTabIcon = () => (
  <Svg w={24} h={24}>
    <circle cx="10" cy="10" r="9" stroke="#8d8d8d" strokeWidth="1.300" />
    <path d="M2 10l4-3 4 3 4-3 5 2M5 16v-5M8 17v-6M11 17v-6M14 16v-6M16 17l7 6" stroke="#8d8d8d" strokeWidth="1.100" />
  </Svg>
)

const Chevrons = ({ c = '#eee' }) => (
  <Svg w={8} h={10} vb="0 0 9 11"><path d="M1 0h2.500L8 5.500 3.500 11H1l4-5.500z" fill={c} /></Svg>
)
const Tick = () => (
  <Svg w={10} h={10}><path d="M1.500 5.500l2.500 2.500 5-6" stroke="#143f38" /></Svg>
)
const Sigma = () => (
  <Svg w={12} h={13}><path d="M11 1H1l5 5.500L1 12h10" stroke={W} /></Svg>
)
const CalIcon = () => (
  <Svg w={12} h={12}><path d="M1.500 2.500c0-1 .5-1 1-1h7c.5 0 1 0 1 1v8c0 1-.5 1-1 1h-7c-.5 0-1 0-1-1zM1.500 4.500h9" stroke={W} /><path d="M3 6h1v1H3zM5.500 6h1v1h-1zM8 6h1v1H8zM3 8h1v1H3zM5.500 8h1v1h-1z" fill={W} /></Svg>
)

const cards = [
  ['Venta Total', '$ 390.344.816'],
  ['Costo Total', '$ 195.973.806'],
  ['Utilidad', '$ 194.371.010'],
  ['Cantidad', '77436']
]
const product = [
  ['Producto mas vendido', 'Queso brie', true],
  ['Unidades Vendidas', '752', false],
  ['Ventas Producto', '$ 3.801.817', false]
]
const handles = [
  [175, 36, 10, 2], [175, 36, 2, 10], [175, 155, 2, 10], [175, 163, 10, 2],
  [175, 95, 3, 14], [1116, 36, 10, 2], [1119, 36, 2, 10], [1119, 155, 2, 10], [1111, 163, 10, 2],
  [1119, 95, 3, 14], [640, 37, 12, 3], [640, 162, 12, 3]
]
const fields = [
  ['Apellido Cliente'],
  ['Cantidad', true, 's'],
  ['Continente'],
  ['Costo Total', true, 's'],
  ['Costo Unitario', false, 's'],
  ['Fecha', false, 'c', true],
  ['Marca'],
  ['Nombre cliente'],
  ['Nombre Produ...'],
  ['País'],
  ['Precio Total', true, 's'],
  ['Precio Unitario', false, 's'],
  ['Subcategoría'],
  ['Utilidad', true, 's']
]

export default function App() {
  return (
    <Page>
      <GlobalStyle />
      <TitleBar>
        <TitleLeft>
          <Svg w={16} h={16}><path d="M1.500 1.500h11l2 2v11h-13zM4.500 1.500v4h6v-4M4 14.500v-5h8v5" stroke={W} /></Svg>
          <Svg w={16} h={16}><path d="M5 1L1.500 5 6 8M2 5h7a4.500 4.500 0 0 1 0 9H6" stroke={W} /></Svg>
          <Svg w={16} h={16}><path d="M11 1l3.500 4L10 8M14 5H7a4.500 4.500 0 0 0 0 9h3" stroke="#5a5a5a" /></Svg>
          <DocName>cursopowerbi • Last saved: Today at 8:10 PM &nbsp;▿</DocName>
        </TitleLeft>
        <TopSearch>
          <Svg w={18} h={18}><circle cx="11" cy="7" r="5.500" stroke="#ccc" /><path d="M7 11l-5.500 5.500" stroke="#ccc" /></Svg>
          Search
        </TopSearch>
        <TitleRight>
          <SignIn>Sign in</SignIn>
          <Svg w={20} h={20}><circle cx="10" cy="10" r="9.500" fill="#8a8a8a" /><circle cx="10" cy="7.500" r="3.500" fill="#2a2a2a" /><path d="M3.500 16a7 7 0 0 1 13 0c-3 3-10 3-13 0z" fill="#2a2a2a" /></Svg>
          <WinBtn $ml={15}><Svg w={12} h={2}><path d="M1 1h10" stroke="#ddd" /></Svg></WinBtn>
          <WinBtn><Svg w={12} h={12}><path d="M.500 3h8.500v8.500H.500zM3 3V.500h8.500V9H9" stroke="#ddd" /></Svg></WinBtn>
          <WinBtn><X size={15} strokeWidth={1} /></WinBtn>
        </TitleRight>
      </TitleBar>

      <MenuBar>
        <MenuItem $w={54}>File</MenuItem>
        <MenuItem $w={59}>Home</MenuItem>
        <MenuItem $w={58} $active>Insert</MenuItem>
        <MenuItem $w={82}>Modeling</MenuItem>
        <MenuItem $w={54}>View</MenuItem>
        <MenuItem $w={79}>Optimize</MenuItem>
        <MenuItem $w={50}>Help</MenuItem>
        <MenuItem $w={70} $ctx>Format</MenuItem>
        <MenuItem $w={90} $ctx>Data / Drill</MenuItem>
        <ShareBtn>
          <Svg w={14} h={14}><path d="M1.500 4.500v8h9V9M5 9c0-3 2-4.500 5-4.500V2l3.500 3.500L10 9V6.500C8 6.500 6 7 5 9z" stroke="#cfe9e3" /></Svg>
          Share
          <ChevronDown size={12} />
        </ShareBtn>
      </MenuBar>

      <Ribbon>
        <Group $w={59}>
          <GroupRow>
            <RibbonBtn $w={58}><NewPageIcon /><span>New<br />page<Caret size={9} strokeWidth={2} /></span></RibbonBtn>
          </GroupRow>
          <GroupName>Pages</GroupName>
        </Group>
        <Group $w={108}>
          <GroupRow $pl={5}>
            <RibbonBtn $w={46}><NewVisualIcon /><span>New<br />visual</span></RibbonBtn>
            <RibbonBtn $w={46}><MoreVisualsIcon /><span>More<br />visuals<Caret size={9} strokeWidth={2} /></span></RibbonBtn>
          </GroupRow>
          <GroupName>Visuals</GroupName>
        </Group>
        <Group $w={256}>
          <GroupRow $pl={9}>
            <RibbonBtn $w={40}><QnaIcon /><span>Q&amp;A</span></RibbonBtn>
            <RibbonBtn $w={60}><KeyInfIcon /><span>Key<br />influencers</span></RibbonBtn>
            <RibbonBtn $w={88}><DecompIcon /><span>Decomposition<br />tree</span></RibbonBtn>
            <RibbonBtn $w={48}><NarrativeIcon /><span>Narrative</span></RibbonBtn>
          </GroupRow>
          <GroupName>AI visuals</GroupName>
        </Group>
        <Group $w={170}>
          <GroupRow $pl={8}>
            <RibbonBtn $w={56}><PaginatedIcon /><span>Paginated<br />report</span></RibbonBtn>
            <RibbonBtn $w={42}><PowerAppsIcon /><span>Power<br />Apps</span></RibbonBtn>
            <RibbonBtn $w={54}><AutomateIcon /><span>Power<br />Automate</span></RibbonBtn>
          </GroupRow>
          <GroupName>Power Platform</GroupName>
        </Group>
        <Group $w={183}>
          <GroupRow $pl={9}>
            <RibbonBtn $w={40}><TextBoxIcon /><span>Text<br />box</span></RibbonBtn>
            <RibbonBtn $w={44}><ButtonsIcon /><span>Buttons<br /><Caret size={9} strokeWidth={2} /></span></RibbonBtn>
            <RibbonBtn $w={42}><ShapesIcon /><span>Shapes<br /><Caret size={9} strokeWidth={2} /></span></RibbonBtn>
            <RibbonBtn $w={40}><ImageIcon /><span>Image</span></RibbonBtn>
          </GroupRow>
          <GroupName>Elements</GroupName>
        </Group>
        <Group $w={69}>
          <GroupRow>
            <RibbonBtn $w={69} $off><SparkIcon /><span>Add a<br />sparkline</span></RibbonBtn>
          </GroupRow>
          <GroupName>Sparklines</GroupName>
        </Group>
        <CollapseBtn>
          <Svg w={12} h={8}><path d="M1 7l5-5 5 5" stroke="#e4e4e4" strokeWidth="1.600" /></Svg>
        </CollapseBtn>
      </Ribbon>

      <Body>
        <LeftNav>
          <NavBtn $on><NavReport /></NavBtn>
          <NavBtn><NavTable /></NavBtn>
          <NavBtn><NavModel /></NavBtn>
          <NavBtn><NavDax /></NavBtn>
        </LeftNav>

        <Work>
          <WorkTop>
            <CanvasArea>
              <Report>
                <ReportTitle>Dashboard<br />de ventas</ReportTitle>
                {[182, 423, 663, 903].map(x => <Banner key={x} $x={x} />)}
                <HeaderBtn $x={1066}>
                  <Svg w={14} h={12}><path d="M1 2h12M3 6h8M5.500 10h3" stroke="#555" /></Svg>
                </HeaderBtn>
                <HeaderBtn $x={1094}>·</HeaderBtn>
                <CardGroup>
                  {cards.map(([label, value]) => (
                    <Card key={label}>
                      <CardLabel>{label}</CardLabel>
                      <CardValue>{value}</CardValue>
                    </Card>
                  ))}
                </CardGroup>
                {handles.map(([x, y, w, h], i) => <Handle key={i} $x={x} $y={y} $w={w} $h={h} />)}
                <ProductPanel>
                  {product.map(([label, value, bold]) => (
                    <Card key={label} $pt={7}>
                      <CardLabel>{label}</CardLabel>
                      <ProductValue $bold={bold}>{value}</ProductValue>
                    </Card>
                  ))}
                </ProductPanel>
                <Logo>Datly<LogoSub>educación</LogoSub></Logo>
              </Report>
            </CanvasArea>

            <FiltersPane>
              <PaneHead $light $pl={12} $pr={12} $gap={10}>
                <Svg w={14} h={12}><path d="M1 2h12M3 6h8M5.500 10h3" stroke="#333" /></Svg>
                Filters
                <PushRight>
                  <Eye size={11} strokeWidth={1.4} color="#333" />
                  <Chevrons c="#222" />
                </PushRight>
              </PaneHead>
              <FilterSearchWrap>
                <FilterSearch><Search size={13} strokeWidth={1.3} color="#444" />Search</FilterSearch>
              </FilterSearchWrap>
              <FilterBody>
                <FilterTitle>Filters on this visual<Dots>...</Dots></FilterTitle>
                <FilterCards>
                  {['Cantidad', 'Costo Total', 'Precio Total', 'Utilidad'].map(n => (
                    <FilterCard key={n}>Sum of {n}<br />is (All)</FilterCard>
                  ))}
                  <AddFields>Add data fields here</AddFields>
                </FilterCards>
                <FilterTitle $mt={25} $mb={10}>Filters on this page<Dots>...</Dots></FilterTitle>
                <AddFields>Add data fields here</AddFields>
                <FilterTitle $mt={26}>Filters on all pages<Dots>...</Dots></FilterTitle>
                <AddFields>Add data fields here</AddFields>
              </FilterBody>
            </FiltersPane>
          </WorkTop>

          <TabBar>
            <DeviceBox>
              <DeviceBtn $w={47}><Svg w={16} h={18}><path d="M1.500 1.500h13v11h-13zM8 12.500v3M4 16.500h8" stroke="#eee" /></Svg></DeviceBtn>
              <DeviceBtn $w={33}><Svg w={12} h={20}><rect x="1.500" y=".500" width="9" height="19" rx="2" stroke="#eee" /><path d="M4.500 16.500h3" stroke="#eee" /></Svg></DeviceBtn>
              <DeviceBtn $w={21}><Svg w={7} h={12}><path d="M6 1L1.500 6 6 11z" stroke="#bbb" /></Svg></DeviceBtn>
              <DeviceBtn $w={8}><Svg w={7} h={12}><path d="M1 1l4.500 5L1 11z" stroke="#bbb" /></Svg></DeviceBtn>
              <DeviceMark />
            </DeviceBox>
            <PageTab>Page 1</PageTab>
            <AddTab><Plus size={14} strokeWidth={3} /></AddTab>
          </TabBar>
        </Work>

        <VizPane>
          <PaneHead $pl={8} $pr={10}>
            Visualizations
            <PushRight><Chevrons /></PushRight>
          </PaneHead>
          <BuildLabel>Build visual</BuildLabel>
          <VizTabs>
            <VizTab $on $mr={35}><BuildTabIcon /></VizTab>
            <VizTab $mr={33}><FormatTabIcon /></VizTab>
            <VizTab><AnalyticsTabIcon /></VizTab>
          </VizTabs>
          <VizGrid>
            {viz.map((icon, i) => (
              <VizCell key={i}>
                {i === 38
                  ? <SelectedViz><svg viewBox="0 0 26 22" fill="none">{icon}</svg></SelectedViz>
                  : <svg viewBox="0 0 18 18" fill="none">{icon}</svg>}
              </VizCell>
            ))}
          </VizGrid>
          <WellLabel $mt={9}>Data</WellLabel>
          <Well>
            {['Precio Total', 'Costo Total', 'Utilidad', 'Cantidad'].map(n => (
              <Chip key={n}>
                Sum of {n}
                <ChipIcons>
                  <ChevronDown size={12} strokeWidth={1.2} />
                  <X size={11} strokeWidth={1.4} />
                </ChipIcons>
              </Chip>
            ))}
          </Well>
          <WellLabel $mt={11}>Categories</WellLabel>
          <EmptyWell>Add data fields here</EmptyWell>
          <WellLabel $mt={11}>Tooltips</WellLabel>
          <EmptyWell>Add data fields here</EmptyWell>
          <WellLabel $mt={11} $mb={4}>Drill through</WellLabel>
          <ToggleRow>Cross-report<Toggle>Off</Toggle></ToggleRow>
          <ToggleRow>Keep all filters<Toggle $on>On</Toggle></ToggleRow>
          <EmptyWell $dark $mt={5} $h={25}>Add drill-through fields here</EmptyWell>
        </VizPane>

        <DataPane>
          <PaneHead $pl={8} $pr={10}>
            Data
            <PushRight><Chevrons /></PushRight>
          </PaneHead>
          <DataSearch><Search size={15} strokeWidth={1.2} color="#a0a0a0" />Search</DataSearch>
          <TreeRoot>
            <ChevronDown size={11} strokeWidth={1.2} />
            <RootIcon>
              <Svg w={14} h={14}><path d="M1.500 3c0-1 .5-1.500 1.500-1.500h8c1 0 1.500.5 1.500 1.500v8c0 1-.5 1.500-1.500 1.500H3c-1 0-1.500-.5-1.500-1.500zM1.500 5h11M1.500 9h11M5 1.500v11M9 1.500v11" stroke={W} /></Svg>
              <Badge><Svg w={12} h={12}><path d="M3 6l2 2 4-4" stroke="#fff" strokeWidth="1.300" /></Svg></Badge>
            </RootIcon>
            DataDiaUno
          </TreeRoot>
          {fields.map(([name, on, kind, exp]) => (
            <TreeRow key={name}>
              <Expand>{exp && <ChevronRight size={12} strokeWidth={1.3} />}</Expand>
              <Check $on={on}>{on && <Tick />}</Check>
              <span />
              <span>
                {kind === 's' && <Sigma />}
                {kind === 'c' && <CalIcon />}
              </span>
              <FieldName>{name}</FieldName>
            </TreeRow>
          ))}
        </DataPane>
      </Body>

      <StatusBar>
        Page 1 of 1
        <StatusRight>
          <MinusMark />
          <Slider />
          <Plus size={11} strokeWidth={1.2} />
          <ZoomPct>90%</ZoomPct>
          <FitIcon><Svg w={14} h={10}><path d="M.500.500h13v9H.500z" stroke="#ccc" /><path d="M4 2.500H2.500v5H4M10 2.500h1.500v5H10" stroke="#ccc" /></Svg></FitIcon>
          Update available (click to download)
        </StatusRight>
      </StatusBar>

      <TaskBar>
        <StartBtn>
          <Svg w={16} h={16}><path d="M0 2.300l6.500-.9v6.200H0zM7.300 1.300L16 0v7.600H7.300zM0 8.400h6.500v6.200L0 13.700zM7.300 8.400H16V16l-8.700-1.200z" fill="#fff" /></Svg>
        </StartBtn>
        <TaskSearch>
          <Svg w={18} h={18}><circle cx="11" cy="7" r="5.500" stroke="#222" /><path d="M7 11l-5.500 5.500" stroke="#222" /></Svg>
          Buscar
          <Shark>
            <Svg w={72} h={38}>
              <circle cx="47" cy="8" r="5" fill="#d8eef9" stroke="#9fd0ec" />
              <circle cx="55" cy="16" r="2.500" fill="#d8eef9" stroke="#9fd0ec" />
              <circle cx="12" cy="33" r="2.500" fill="#d8eef9" stroke="#9fd0ec" />
              <path d="M1 18c8-5 18-6 26-6l8-8c0 3 0 6 2 8 8 2 16 7 20 12l11-6-4 10 4 8c-6-3-12-7-17-7l-6 0-3 5-3-6c-8 1-12 2-17 0l-5-3C9 23 3 21 1 18z" fill="#7f9fbb" />
              <path d="M5 20c8 4 26 5 38 3-4 5-14 5-21 4z" fill="#e9f2f7" />
              <path d="M35 14c6 2 14 7 18 11l-10-2z" fill="#4a7fa8" />
            </Svg>
          </Shark>
        </TaskSearch>
        <TaskApps>
          <TaskApp $w={48}>
            <Svg w={16} h={20}><path d="M.500 1.500h11M.500 18.500h11M1.500 5.500h9v9h-9zM14 5h2M14 9.500h2v2h-2zM14 14h2" stroke="#eee" /></Svg>
          </TaskApp>
          <TaskApp $w={50}>
            <Svg w={24} h={24}>
              <path d="M3 9c1-6 5-8 9-8l5 1-4 8-3 10c-4 3-8 2-8-3z" fill="#2f8fe8" />
              <path d="M13 1c5 0 7 3 7 8l-4 1-4-1z" fill="#4dc97e" />
              <path d="M20 8c3 0 4 3 3 7-1 6-6 8-10 8l-4-1 5-8z" fill="#c850c0" />
              <path d="M17 9l-3 11 6-3 2-7z" fill="#f2b23d" />
            </Svg>
          </TaskApp>
          <TaskApp $w={51} $open>
            <Svg w={24} h={26}>
              <circle cx="11" cy="11" r="10" fill="#f4f4f4" stroke="#d84a3f" strokeWidth="2" />
              <path d="M1 16c4 3 6 4 10 4l-2 4c-5 0-8-2-8-8z" fill="#777" />
              <path d="M11 4l3 12M16 4l-5 12" stroke="#2d86d8" strokeWidth="1.200" />
              <circle cx="11" cy="20" r="2.500" stroke="#2d86d8" />
              <circle cx="16" cy="21" r="2.500" stroke="#2d86d8" />
            </Svg>
          </TaskApp>
          <TaskApp $w={49}>
            <Svg w={22} h={22}>
              <rect x="1" y="1" width="20" height="20" rx="2" fill="#3b9fe0" />
              <circle cx="7" cy="9" r="3.500" fill="#f2c14d" />
              <path d="M13 5h6v2h-6zM13 9h6v2h-6zM3 15h16v2H3z" fill="#e9f4fb" />
            </Svg>
          </TaskApp>
          <TaskApp $w={49} $open>
            <Svg w={22} h={20}>
              <path d="M1 2h8l2 2h10v15H1z" fill="#f2c14d" />
              <path d="M1 7h20v12H1z" fill="#ffd96a" />
              <rect x="7" y="11" width="8" height="8" fill="#2b7fd0" />
              <rect x="10" y="15" width="2" height="4" fill="#ffd96a" />
            </Svg>
          </TaskApp>
          <TaskApp $w={49}>
            <Svg w={24} h={24}>
              <path d="M12 1a11 11 0 0 1 11 11c0 4-3 6-6 6-4 0-6-2-6-4 0-1 1-2 2-2-1-3-4-4-7-3-3 1-5 3-5 6C1 6 6 1 12 1z" fill="#3ec6a0" />
              <path d="M1 12c0-4 3-6 6-6 3 0 5 1 6 5-3-1-6 1-5 5 1 4 6 7 11 5-2 1-4 2-7 2C6 23 1 18 1 12z" fill="#1e78d0" />
            </Svg>
          </TaskApp>
          <TaskApp $w={49} $open>
            <Svg w={20} h={24}>
              <path d="M4 1h12l3 4-1 11-8 7-8-7L1 5z" fill="#f0501e" />
              <path d="M6 9l4-2 4 2-1 5-3 4-3-4z" fill="#fff" />
              <path d="M8 11h1M11 11h1M10 13v3" stroke="#f0501e" />
            </Svg>
          </TaskApp>
          <TaskApp $w={48} $open $active>
            <Svg w={22} h={28}>
              <rect x="13" y="1" width="7" height="26" rx="1" fill="#e8b100" />
              <rect x="7" y="8" width="8" height="19" rx="1" fill="#f2c811" />
              <rect x="2" y="14" width="8" height="13" rx="1" fill="#ffe27a" />
            </Svg>
          </TaskApp>
          <TaskApp $w={50} $open>
            <Svg w={24} h={24}>
              <rect x="7" y="2" width="16" height="20" rx="1" fill="#f4f6fa" />
              <path d="M14 6h7M14 10h7M14 14h7M14 18h7" stroke="#2b5fa8" strokeWidth="1.400" />
              <rect x="1" y="5" width="14" height="14" rx="1" fill="#2b5fa8" />
              <text x="8" y="16" fontSize="11" fontWeight="700" fill="#fff" textAnchor="middle" fontFamily="Roboto">W</text>
            </Svg>
          </TaskApp>
          <TaskApp $w={49} $open>
            <Svg w={24} h={24}>
              <rect x="7" y="2" width="16" height="20" rx="1" fill="#f4f6fa" />
              <path d="M15 2v20M19 2v20M13 7h10M13 12h10M13 17h10" stroke="#1f7a48" />
              <rect x="1" y="5" width="14" height="14" rx="1" fill="#1f7a48" />
              <text x="8" y="16" fontSize="11" fontWeight="700" fill="#fff" textAnchor="middle" fontFamily="Roboto">X</text>
            </Svg>
          </TaskApp>
        </TaskApps>
        <Tray>
          <TrayItem $mr={10}><Svg w={13} h={8}><path d="M1 7l5.500-5.500L12 7" stroke="#eee" strokeWidth="1.200" /></Svg></TrayItem>
          <TrayItem $mr={6}><Svg w={16} h={14}><path d="M4.500 1.500h11v9h-11zM10 10.500v3M6 13.500h8M.500 1.500h5v4h-5z" stroke="#eee" /></Svg></TrayItem>
          <TrayItem $mr={12}><Svg w={16} h={14}><path d="M1 5h3l4-4v12l-4-4H1zM10.500 5a3 3 0 0 1 0 4M12.500 3a6 6 0 0 1 0 8" stroke="#ccc" /></Svg></TrayItem>
          <TrayItem $mr={8}>ESP</TrayItem>
          <Clock>8:36 p. m.<br />14/07/2025</Clock>
          <Notify>
            <Svg w={18} h={17}><path d="M1 1h16v11H6l-3 4v-4H1z" fill="#f4f4f4" /><path d="M4 4h10M4 7h10M4 10h6" stroke="#555" /></Svg>
            <NotifyCount>1</NotifyCount>
          </Notify>
        </Tray>
      </TaskBar>

      <Watermark>
        <WatermarkBig>Activar Windows</WatermarkBig>
        Ve a Configuración para activar Windows.
      </Watermark>
    </Page>
  )
}
